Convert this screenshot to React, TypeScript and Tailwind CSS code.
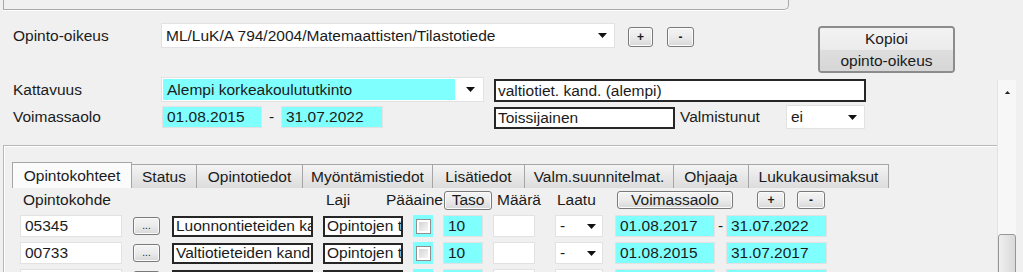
import React from 'react'

const cyan = 'bg-[#80ffff]'

function Arrow() {
  return (
    <svg width="9" height="5" viewBox="0 0 9 5" className="shrink-0">
      <path d="M0 0 H9 L4.5 5 Z" fill="#111" />
    </svg>
  )
}

function Btn({ className = '', children }: { className?: string; children?: React.ReactNode }) {
  return (
    <div
      className={
        'flex items-center justify-center rounded-[3px] border border-[#7a7a7a] bg-gradient-to-b from-[#f4f4f4] via-[#ebebeb] to-[#d8d8d8] shadow-[inset_0_0_0_1px_#fbfbfb] leading-none ' +
        className
      }
    >
      {children}
    </div>
  )
}

function Field({ className = '', children }: { className?: string; children?: React.ReactNode }) {
  return (
    <div className={'flex items-center overflow-hidden whitespace-nowrap border border-[#e2e2e2] pl-[4px] ' + className}>
      {children}
    </div>
  )
}

function BoxedText({ className = '', children }: { className?: string; children?: React.ReactNode }) {
  return (
    <div className={'flex items-center overflow-hidden whitespace-nowrap border-2 border-[#262626] bg-white pl-[2px] ' + className}>
      {children}
    </div>
  )
}

const tabs = [
  { label: 'Opintokohteet', w: 'w-[120px]', active: true },
  { label: 'Status', w: 'w-[66px]' },
  { label: 'Opintotiedot', w: 'w-[107px]' },
  { label: 'Myöntämistiedot', w: 'w-[131px]' },
  { label: 'Lisätiedot', w: 'w-[93px]' },
  { label: 'Valm.suunnitelmat.', w: 'w-[150px]' },
  { label: 'Ohjaaja', w: 'w-[76px]' },
  { label: 'Lukukausimaksut', w: 'w-[141px]' },
]

const rows = [
  { code: '05345', name: 'Luonnontieteiden kandidaatti', laji: 'Opintojen tavoite', taso: '10', from: '01.08.2017', dash: true, to: '31.07.2022' },
  { code: '00733', name: 'Valtiotieteiden kandidaatti', laji: 'Opintojen tavoite', taso: '10', from: '01.08.2015', dash: false, to: '31.07.2017' },
  { code: '', name: '', laji: '', taso: '', from: '', dash: false, to: '' },
]

function Row({ r }: { r: (typeof rows)[number] }) {
  return (
    <div className="flex h-[22px] items-center">
      <Field className="ml-[16px] h-[22px] w-[102px] bg-white">{r.code}</Field>
      <Btn className="ml-[11px] h-[18px] w-[27px] items-end pb-[3px] text-[10px]">...</Btn>
      <BoxedText className="ml-[12px] h-[21px] w-[141px]">{r.name}</BoxedText>
      <BoxedText className="ml-[10px] h-[21px] w-[80px]">{r.laji}</BoxedText>
      <div className={'ml-[10px] flex h-[22px] w-[20px] items-center justify-center ' + cyan}>
        <div className="h-[15px] w-[15px] border border-[#8f8f8f] bg-white p-[2px]">
          <div className="h-full w-full bg-gradient-to-br from-[#d4d4d4] to-[#f6f6f6]" />
        </div>
      </div>
      <Field className={'ml-[10px] h-[22px] w-[40px] ' + cyan}>{r.taso}</Field>
      <Field className="ml-[10px] h-[22px] w-[42px] bg-white" />
      <Field className="ml-[20px] h-[22px] w-[48px] justify-between bg-white pr-[6px]">
        <span>-</span>
        <Arrow />
      </Field>
      <Field className={'ml-[12px] h-[22px] w-[100px] ' + cyan}>{r.from}</Field>
      <span className="w-[11px] text-center">{r.dash ? '-' : ''}</span>
      <Field className={'h-[22px] w-[101px] ' + cyan}>{r.to}</Field>
    </div>
  )
}

export default function App() {
  return (
    <div className="h-[272px] w-[1023px] overflow-hidden bg-[#f0f0f0] font-['Liberation_Sans',Arial,sans-serif] text-[15.5px] leading-none text-[#1b1b1b]">
      <div className="ml-[3px] h-[10px] w-[786px] rounded-br-[5px] border-x border-b border-[#a9a9a9] shadow-[0_1px_0_#ffffff]" />

      <div className="flex">
        <div className="w-[997px] shrink-0">
          {/* Opinto-oikeus */}
          <div className="mt-[13px] flex h-[52px] items-start">
            <div className="flex h-[25px] w-[161px] items-center pl-[13px]">Opinto-oikeus</div>
            <Field className="h-[25px] w-[454px] justify-between bg-white pr-[7px]">
              <span>ML/LuK/A 794/2004/Matemaattisten/Tilastotiede</span>
              <Arrow />
            </Field>
            <Btn className="ml-[13px] mt-[4px] h-[20px] w-[25px] items-end pb-[3px] text-[12px] font-bold">+</Btn>
            <Btn className="ml-[14px] mt-[4px] h-[20px] w-[27px] items-end pb-[3px] text-[12px] font-bold">-</Btn>
            <div className="ml-[124px] mt-[3px] flex h-[47px] w-[137px] flex-col overflow-hidden rounded-[4px] border-2 border-[#8c8c8c] text-center leading-[21px]">
              <div className="h-[22px] bg-gradient-to-b from-[#f3f3f3] to-[#ebebeb]">Kopioi</div>
              <div className="flex-1 bg-gradient-to-b from-[#dedede] to-[#d6d6d6]">opinto-oikeus</div>
            </div>
          </div>

          {/* Kattavuus */}
          <div className="mt-[2px] flex h-[25px] items-center">
            <div className="w-[161px] pl-[13px]">Kattavuus</div>
            <div className="flex h-[25px] w-[323px] items-center border border-[#e2e2e2] bg-white p-[1px] pr-[8px]">
              <div className={'flex h-full w-[292px] items-center pl-[4px] ' + cyan}>Alempi korkeakoulututkinto</div>
              <div className="flex flex-1 justify-end">
                <Arrow />
              </div>
            </div>
            <BoxedText className="ml-[10px] mt-[2px] h-[23px] w-[372px]">valtiotiet. kand. (alempi)</BoxedText>
          </div>

          {/* Voimassaolo */}
          <div className="mt-[3px] flex h-[24px] items-center">
            <div className="w-[162px] pl-[13px]">Voimassaolo</div>
            <Field className={'h-[22px] w-[100px] ' + cyan}>01.08.2015</Field>
            <span className="w-[19px] text-center">-</span>
            <Field className={'h-[22px] w-[102px] ' + cyan}>31.07.2022</Field>
            <BoxedText className="ml-[111px] mt-[2px] h-[22px] w-[181px]">Toissijainen</BoxedText>
            <div className="ml-[5px] w-[106px]">Valmistunut</div>
            <Field className="h-[24px] w-[79px] justify-between bg-white pr-[7px]">
              <span>ei</span>
              <Arrow />
            </Field>
          </div>

          {/* Tab panel */}
          <div className="ml-[3px] mt-[16px] h-[200px] border-l border-t border-[#b8b8b8] shadow-[inset_1px_1px_0_#ffffff]">
            <div className="mt-[16px] flex h-[26px] items-end pl-[8px]">
              {tabs.map((t) => (
                <div
                  key={t.label}
                  className={
                    'flex items-center justify-center whitespace-nowrap border border-[#a5a5a5] ' +
                    t.w +
                    (t.active
                      ? ' h-[26px] border-b-0 bg-[#fbfbfb]'
                      : ' -ml-px h-[24px] border-b-0 bg-gradient-to-b from-[#f4f4f4] to-[#dcdcdc]')
                  }
                >
                  {t.label}
                </div>
              ))}
            </div>

            {/* column headers */}
            <div className="mt-[1px] flex h-[22px] items-center">
              <span className="w-[322px] pl-[19px]">Opintokohde</span>
              <span className="w-[60px]">Laji</span>
              <span className="w-[58px] whitespace-nowrap">Pääaine</span>
              <Btn className="h-[19px] w-[48px]">Taso</Btn>
              <span className="ml-[5px] w-[60px]">Määrä</span>
              <span className="w-[60px]">Laatu</span>
              <Btn className="h-[18px] w-[116px]">Voimassaolo</Btn>
              <Btn className="ml-[24px] h-[18px] w-[28px] items-end pb-[2px] text-[12px] font-bold">+</Btn>
              <Btn className="ml-[12px] h-[18px] w-[28px] items-end pb-[2px] text-[12px] font-bold">-</Btn>
            </div>

            <div className="mt-[4px] flex flex-col gap-[5px]">
              {rows.map((r, i) => (
                <Row key={i} r={r} />
              ))}
            </div>
          </div>
        </div>

        {/* scrollbar */}
        <div className="mt-[70px] flex h-[200px] w-[19px] shrink-0 flex-col items-center border-l border-[#e4e4e4] bg-[#f7f7f7]">
          <svg width="7" height="4" viewBox="0 0 7 4" className="mt-[11px]">
            <path d="M0 4 L3.5 0 L7 4 Z" fill="#222" />
          </svg>
          <div className="mt-[140px] h-[60px] w-[18px] rounded-[3px] border border-[#969696] bg-gradient-to-r from-[#efefef] to-[#d9d9d9]" />
        </div>
      </div>
    </div>
  )
}
